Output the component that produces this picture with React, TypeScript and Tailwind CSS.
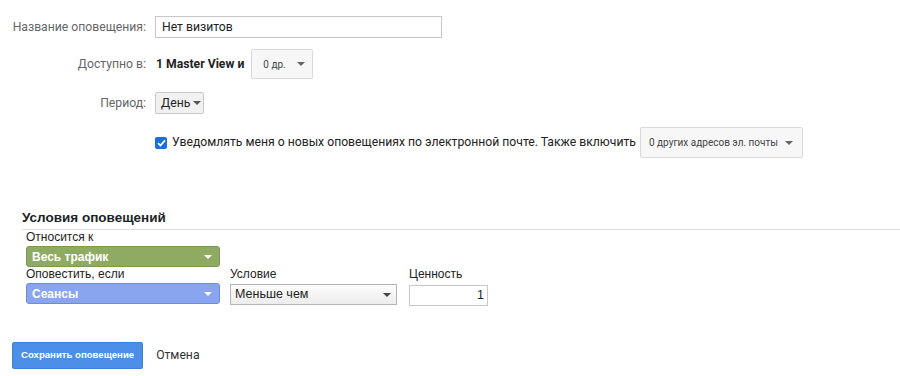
const Caret = ({ className = "" }: { className?: string }) => (
  <svg width="8" height="4" viewBox="0 0 8 4" className={`shrink-0 ${className}`}>
    <path d="M0 0h8L4 4z" fill="currentColor" />
  </svg>
);

const Row = ({ label, children, className = "" }: { label: string; children: React.ReactNode; className?: string }) => (
  <div className={`flex items-center ${className}`}>
    <div className="w-[155px] shrink-0 pr-[9px] text-right text-[12.2px] text-[#666] whitespace-nowrap">{label}</div>
    <div className="flex items-center whitespace-nowrap">{children}</div>
  </div>
);

export default function App() {
  return (
    <div
      className="w-[900px] h-[376px] bg-white overflow-hidden text-[#222]"
      style={{ fontFamily: "Roboto, 'Liberation Sans', Arial, sans-serif" }}
    >
      <div className="pt-[16px]">
        <Row label="Название оповещения:">
          <div className="w-[287px] h-[22px] border border-[#c8c8c8] flex items-center px-[6px] text-[12.2px] text-[#222]">
            Нет визитов
          </div>
        </Row>

        <Row label="Доступно в:" className="mt-[11px]">
          <span className="text-[12.2px] font-bold text-[#222] mr-[7px] ml-[1px]">1 Master View и</span>
          <div className="h-[30px] w-[62px] border border-[#d9d9d9] rounded-[2px] bg-[#f7f7f7] flex items-center pl-[11px] gap-[11px] text-[10px] text-[#444]">
            <span>0 др.</span>
            <Caret className="text-[#666]" />
          </div>
        </Row>

        <Row label="Период:" className="mt-[13px]">
          <div className="h-[22px] w-[49px] border border-[#c8c8c8] rounded-[2px] bg-[#f1f1f1] flex items-center pl-[5px] gap-[3px] text-[12.2px] text-[#222]">
            <span>День</span>
            <Caret className="text-[#555]" />
          </div>
        </Row>

        <div className="flex items-center mt-[13px] pl-[155px] whitespace-nowrap">
          <span className="w-[12px] h-[12px] rounded-[2px] bg-[#1a6fd8] flex items-center justify-center mr-[5px]">
            <svg width="9" height="8" viewBox="0 0 9 8">
              <path d="M1 4.2L3.4 6.5 8 1.3" stroke="white" strokeWidth="1.8" fill="none" />
            </svg>
          </span>
          <span className="text-[12.2px] text-[#222] mr-[4px]">
            Уведомлять меня о новых оповещениях по электронной почте. Также включить
          </span>
          <div className="h-[31px] w-[163px] border border-[#d9d9d9] rounded-[2px] bg-[#f7f7f7] flex items-center justify-between pl-[8px] pr-[9px] text-[10px] text-[#444]">
            <span>0 других адресов эл. почты</span>
            <Caret className="text-[#666]" />
          </div>
        </div>
      </div>

      <div className="mt-[51px] ml-[22px]" style={{ fontFamily: "'Liberation Sans', Arial, sans-serif" }}>
        <div className="text-[13.5px] font-bold text-[#222] leading-[18px]">Условия оповещений</div>
        <div className="h-px bg-[#e0e0e0] mt-[2px]" />
        <div className="pl-[4px] text-[12px] text-[#222]">
          <div className="leading-[15px]">Относится к</div>
          <div className="w-[194px] h-[21px] mt-[1px] rounded-[3px] bg-[#8fab63] border border-[#7c9852] flex items-center justify-between pl-[5px] pr-[7px] text-white font-bold text-[12px]">
            <span>Весь трафик</span>
            <Caret className="text-white" />
          </div>
          <div className="flex">
            <div className="w-[204px]">
              <div className="leading-[15px]">Оповестить, если</div>
              <div className="w-[194px] h-[21px] mt-[1px] rounded-[3px] bg-[#8aa5f0] border border-[#6f8bd8] flex items-center justify-between pl-[5px] pr-[7px] text-white font-bold text-[12px]">
                <span>Сеансы</span>
                <Caret className="text-white" />
              </div>
            </div>
            <div className="w-[179px]">
              <div className="leading-[15px]">Условие</div>
              <div className="w-[167px] h-[21px] mt-[2px] border border-[#b5b5b5] bg-gradient-to-b from-[#fdfdfd] to-[#ececec] flex items-center justify-between pl-[4px] pr-[5px] text-[12.5px]">
                <span>Меньше чем</span>
                <Caret className="text-[#444]" />
              </div>
            </div>
            <div>
              <div className="leading-[15px]">Ценность</div>
              <div className="w-[79px] h-[21px] mt-[3px] border border-[#c8c8c8] flex items-center justify-end pr-[3px] text-[12.5px]">
                1
              </div>
            </div>
          </div>
        </div>
      </div>

      <div className="flex items-center mt-[36px] ml-[12px]">
        <div
          className="h-[27px] px-[8px] rounded-[2px] bg-[#4d8ee9] border border-[#3f7fd9] flex items-center text-white text-[9.6px] font-bold whitespace-nowrap"
          style={{ fontFamily: "'Liberation Sans', Arial, sans-serif" }}
        >
          Сохранить оповещение
        </div>
        <span className="ml-[13px] text-[12.2px] text-[#333]">Отмена</span>
      </div>
    </div>
  );
}
